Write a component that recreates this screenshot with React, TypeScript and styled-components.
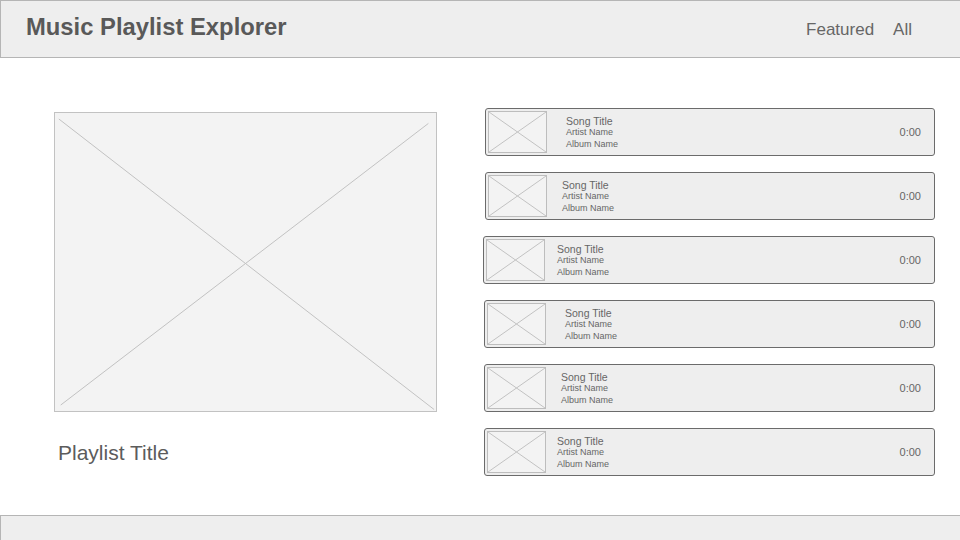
import * as React from 'react'
import styled, { createGlobalStyle } from 'styled-components'

const songs = [
  { title: 'Song Title', artist: 'Artist Name', album: 'Album Name', time: '0:00', indent: 19, shift: 1 },
  { title: 'Song Title', artist: 'Artist Name', album: 'Album Name', time: '0:00', indent: 15, shift: 1 },
  { title: 'Song Title', artist: 'Artist Name', album: 'Album Name', time: '0:00', indent: 12, shift: -1 },
  { title: 'Song Title', artist: 'Artist Name', album: 'Album Name', time: '0:00', indent: 19, shift: 0 },
  { title: 'Song Title', artist: 'Artist Name', album: 'Album Name', time: '0:00', indent: 15, shift: 0 },
  { title: 'Song Title', artist: 'Artist Name', album: 'Album Name', time: '0:00', indent: 11, shift: 0 }
]

const Placeholder = ({ inset }: { inset?: boolean }) => (
  <PlaceholderSvg viewBox="0 0 100 100" preserveAspectRatio="none">
    {inset ? (
      <>
        <line x1="1" y1="2" x2="99.5" y2="99.5" vectorEffect="non-scaling-stroke" />
        <line x1="98" y1="3.5" x2="1.5" y2="98" vectorEffect="non-scaling-stroke" />
      </>
    ) : (
      <>
        <line x1="0" y1="0" x2="100" y2="100" vectorEffect="non-scaling-stroke" />
        <line x1="100" y1="0" x2="0" y2="100" vectorEffect="non-scaling-stroke" />
      </>
    )}
  </PlaceholderSvg>
)

const App = () => (
  <>
    <GlobalStyle />
    <Page>
      <Header>
        <AppTitle>Music Playlist Explorer</AppTitle>
        <Nav>
          <NavLink>Featured</NavLink>
          <NavLink>All</NavLink>
        </Nav>
      </Header>

      <Main>
        <PlaylistColumn>
          <Cover>
            <Placeholder inset />
          </Cover>
          <PlaylistTitle>Playlist Title</PlaylistTitle>
        </PlaylistColumn>

        <SongList>
          {songs.map((song, i) => (
            <SongRow key={i} shift={song.shift}>
              <Thumb>
                <Placeholder />
              </Thumb>
              <SongInfo indent={song.indent}>
                <SongName>{song.title}</SongName>
                <SongMeta>{song.artist}</SongMeta>
                <SongMeta>{song.album}</SongMeta>
              </SongInfo>
              <Duration>{song.time}</Duration>
            </SongRow>
          ))}
        </SongList>
      </Main>

      <Footer />
    </Page>
  </>
)

const GlobalStyle = createGlobalStyle`
  html, body {
    margin: 0;
    padding: 0;
    background: #ffffff;
    font-family: "Liberation Sans", Arial, sans-serif;
  }
  * {
    box-sizing: border-box;
  }
`

const Page = styled.div`
  width: 960px;
  height: 540px;
  display: flex;
  flex-direction: column;
  overflow: hidden;
`

const Header = styled.header`
  height: 58px;
  flex: none;
  display: flex;
  align-items: center;
  justify-content: space-between;
  padding: 0 48px 0 25px;
  background: #eeeeee;
  border: 1px solid #b5b5b5;
  border-right: none;
`

const AppTitle = styled.h1`
  margin: 0 0 4px;
  font-size: 23.8px;
  font-weight: bold;
  color: #595959;
`

const Nav = styled.nav`
  display: flex;
  gap: 19px;
  margin-top: 1px;
`

const NavLink = styled.span`
  font-size: 17px;
  color: #666666;
`

const Main = styled.main`
  flex: 1;
  display: flex;
  align-items: flex-start;
  padding-left: 54px;
`

const PlaylistColumn = styled.section`
  width: 383px;
  margin-top: 54px;
  display: flex;
  flex-direction: column;
`

const Cover = styled.div`
  height: 300px;
  background: #f3f3f3;
  border: 1px solid #c2c2c2;
`

const PlaceholderSvg = styled.svg`
  display: block;
  width: 100%;
  height: 100%;
  line {
    stroke: #c2c2c2;
    stroke-width: 1;
  }
`

const PlaylistTitle = styled.h2`
  margin: 29px 0 0 4px;
  font-size: 21px;
  line-height: 24px;
  font-weight: normal;
  color: #5c5c5c;
`

const SongList = styled.section`
  width: 451px;
  margin: 50px 0 0 47px;
  display: flex;
  flex-direction: column;
  gap: 16px;
`

const SongRow = styled.div<{ shift: number }>`
  height: 48px;
  display: flex;
  align-items: center;
  padding: 2px 13px 2px 2px;
  margin-left: ${p => p.shift}px;
  background: #eeeeee;
  border: 1px solid #6b6b6b;
  border-radius: 3px;
`

const Thumb = styled.div`
  width: 59px;
  height: 42px;
  flex: none;
  background: #f3f3f3;
  border: 1px solid #bdbdbd;
`

const SongInfo = styled.div<{ indent: number }>`
  flex: 1;
  display: flex;
  flex-direction: column;
  margin: 1px 0 0 ${p => p.indent}px;
  color: #666666;
`

const SongName = styled.span`
  font-size: 10.5px;
  line-height: 12px;
`

const SongMeta = styled.span`
  font-size: 9px;
  line-height: 11.5px;
`

const Duration = styled.span`
  font-size: 11px;
  color: #666666;
`

const Footer = styled.footer`
  height: 25px;
  flex: none;
  background: #eeeeee;
  border: 1px solid #b5b5b5;
  border-right: none;
  border-bottom: none;
`

export default App
